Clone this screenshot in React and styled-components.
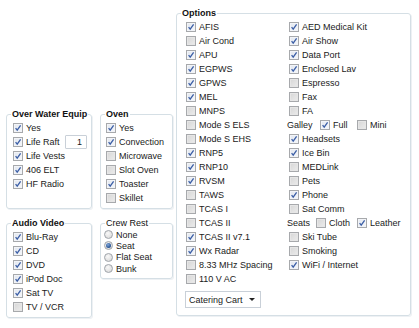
import React from 'react';
import styled, { createGlobalStyle, css } from 'styled-components';

const GlobalStyle = createGlobalStyle`
    html, body {
        margin: 0;
        background: #ffffff;
    }
    body {
        font-family: 'Liberation Sans', Arial, sans-serif;
        font-size: 9px;
        color: #1a1a1a;
    }
`;

const Page = styled.div`
    display: flex;
    align-items: flex-start;
    width: 419px;
    height: 328px;
`;

const LeftCol = styled.div`
    display: flex;
    flex-direction: column;
    gap: 8px;
    margin: 108px 0 0 6px;
`;

const GroupRow = styled.div`
    display: flex;
    align-items: ${(props) => (props.top ? 'flex-start' : 'stretch')};
    gap: 8px;
`;

const Group = styled.fieldset`
    margin: 0;
    padding: 0;
    min-width: 0;
    width: ${(props) => props.w}px;
    box-sizing: border-box;
    border: 1px solid #d5dfe5;
    border-radius: 3px;
    box-shadow: 1px 1px 0 #ffffff inset, 1px 1px 0 #eef1f4;
    ${(props) =>
        props.tall &&
        css`
            min-height: ${props.tall}px;
        `}
`;

const Legend = styled.legend`
    margin-left: 4px;
    padding: 0 1px;
    line-height: 12px;
    font-weight: ${(props) => (props.plain ? 'normal' : 'bold')};
    color: #111;
`;

const Body = styled.div`
    padding: ${(props) => props.pad || '1px 4px 3px 5px'};
`;

const Row = styled.div`
    display: flex;
    align-items: center;
    height: ${(props) => props.h || 14}px;
    white-space: nowrap;
`;

const Box = styled.span`
    flex: none;
    position: relative;
    width: 10px;
    height: 10px;
    box-sizing: border-box;
    margin-right: ${(props) => (props.gap !== undefined ? props.gap : 3)}px;
    border: 1px solid #a7a9ac;
    background: ${(props) =>
        props.on
            ? 'linear-gradient(135deg, #e2e7ef 0%, #f5f7fa 100%)'
            : 'linear-gradient(135deg, #d6d6d6 0%, #ececec 100%)'};
    box-shadow: inset 0 0 0 1px ${(props) => (props.on ? '#f2f4f8' : '#e6e6e6')};
    svg {
        position: absolute;
        left: 0;
        top: 0;
    }
`;

const Radio = styled.span`
    flex: none;
    position: relative;
    width: 9px;
    height: 9px;
    box-sizing: border-box;
    margin-right: 3px;
    border-radius: 50%;
    border: 1px solid #9fa4aa;
    background: radial-gradient(circle at 40% 35%, #f8f8f8 0%, #dcdcdc 80%);
    ${(props) =>
        props.on &&
        css`
            &::after {
                content: '';
                position: absolute;
                left: 1px;
                top: 1px;
                width: 5px;
                height: 5px;
                border-radius: 50%;
                background: radial-gradient(circle at 40% 35%, #7fa6d9 0%, #1d4a8c 75%);
            }
        `}
`;

const NumBox = styled.span`
    margin-left: auto;
    width: 22px;
    height: 14px;
    box-sizing: border-box;
    border: 1px solid #c9d0d8;
    border-radius: 1px;
    padding-right: 4px;
    text-align: right;
    line-height: 12px;
    font-size: 9px;
`;

const OptionsGroup = styled(Group)`
    margin: 7px 0 0 3px;
`;

const Columns = styled.div`
    display: grid;
    grid-template-columns: 103px 1fr;
    padding: 1px 0 0 9px;
`;

const Col = styled.div`
    display: flex;
    flex-direction: column;
`;

const Label = styled.span`
    width: ${(props) => props.w}px;
    margin-left: ${(props) => props.shift || 0}px;
`;

const Pair = styled.span`
    display: flex;
    align-items: center;
    width: ${(props) => props.w || 'auto'};
`;

const Select = styled.div`
    display: flex;
    align-items: center;
    justify-content: space-between;
    width: 76px;
    height: 17px;
    box-sizing: border-box;
    margin: 5px 0 7px -1px;
    padding: 0 5px 0 3px;
    border: 1px solid #c9d0d8;
    background: #fff;
`;

const Caret = styled.span`
    width: 0;
    height: 0;
    border-left: 3px solid transparent;
    border-right: 3px solid transparent;
    border-top: 3px solid #222;
`;

function Check({ on, gap }) {
    return (
        <Box on={on} gap={gap}>
            {on && (
                <svg width="8" height="8" viewBox="0 0 8 8">
                    <path d="M1.6 4.2 L3.2 6.2 L6.6 1.4" fill="none" stroke="#3b5ea6" strokeWidth="1.3" />
                </svg>
            )}
        </Box>
    );
}

function Item({ on, children, h }) {
    return (
        <Row h={h}>
            <Check on={on} />
            {children}
        </Row>
    );
}

const overWater = [
    ['Yes', true],
    ['Life Raft', true],
    ['Life Vests', true],
    ['406 ELT', true],
    ['HF Radio', true],
];
const oven = [
    ['Yes', true],
    ['Convection', true],
    ['Microwave', false],
    ['Slot Oven', false],
    ['Toaster', true],
    ['Skillet', false],
];
const audio = [
    ['Blu-Ray', true],
    ['CD', true],
    ['DVD', true],
    ['iPod Doc', true],
    ['Sat TV', true],
    ['TV / VCR', false],
];
const crew = [
    ['None', false],
    ['Seat', true],
    ['Flat Seat', false],
    ['Bunk', false],
];
const optLeft = [
    ['AFIS', true],
    ['Air Cond', false],
    ['APU', true],
    ['EGPWS', true],
    ['GPWS', true],
    ['MEL', true],
    ['MNPS', false],
    ['Mode S ELS', false],
    ['Mode S EHS', false],
    ['RNP5', true],
    ['RNP10', true],
    ['RVSM', true],
    ['TAWS', false],
    ['TCAS I', false],
    ['TCAS II', false],
    ['TCAS II v7.1', true],
    ['Wx Radar', true],
    ['8.33 MHz Spacing', false],
    ['110 V AC', false],
];
const optRightA = [
    ['AED Medical Kit', true],
    ['Air Show', true],
    ['Data Port', true],
    ['Enclosed Lav', true],
    ['Espresso', false],
    ['Fax', false],
    ['FA', false],
];
const optRightB = [
    ['Headsets', true],
    ['Ice Bin', true],
    ['MEDLink', false],
    ['Pets', false],
    ['Phone', true],
    ['Sat Comm', false],
];
const optRightC = [
    ['Ski Tube', false],
    ['Smoking', false],
    ['WiFi / Internet', true],
];

function App() {
    const list = (items) => items.map(([t, on]) => <Item key={t} on={on}>{t}</Item>);
    return (
        <>
            <GlobalStyle />
            <Page>
                <LeftCol>
                    <GroupRow>
                        <Group w={86}>
                            <Legend>Over Water Equip</Legend>
                            <Body pad="1px 4px 3px 6px">
                                {overWater.map(([t, on]) => (
                                    <Item key={t} on={on}>
                                        {t}
                                        {t === 'Life Raft' && <NumBox>1</NumBox>}
                                    </Item>
                                ))}
                            </Body>
                        </Group>
                        <Group w={73}>
                            <Legend>Oven</Legend>
                            <Body>{list(oven)}</Body>
                        </Group>
                    </GroupRow>
                    <GroupRow top>
                        <Group w={86} tall={99}>
                            <Legend>Audio Video</Legend>
                            <Body pad="1px 4px 3px 6px">{list(audio)}</Body>
                        </Group>
                        <Group w={73}>
                            <Legend plain>Crew Rest</Legend>
                            <Body pad="0 4px 4px 3px">
                                {crew.map(([t, on]) => (
                                    <Row key={t} h={11.3}>
                                        <Radio on={on} />
                                        {t}
                                    </Row>
                                ))}
                            </Body>
                        </Group>
                    </GroupRow>
                </LeftCol>
                <OptionsGroup w={235}>
                    <Legend>Options</Legend>
                    <Columns>
                        <Col>
                            {list(optLeft)}
                            <Select>
                                Catering Cart
                                <Caret />
                            </Select>
                        </Col>
                        <Col>
                            {list(optRightA)}
                            <Row>
                                <Label w={33} shift={-2}>Galley</Label>
                                <Pair w="37px">
                                    <Check on />
                                    Full
                                </Pair>
                                <Pair>
                                    <Check />
                                    Mini
                                </Pair>
                            </Row>
                            {list(optRightB)}
                            <Row>
                                <Label w={29} shift={-2}>Seats</Label>
                                <Pair w="41px">
                                    <Check />
                                    Cloth
                                </Pair>
                                <Pair>
                                    <Check on />
                                    Leather
                                </Pair>
                            </Row>
                            {list(optRightC)}
                        </Col>
                    </Columns>
                </OptionsGroup>
            </Page>
        </>
    );
}

export default App;
